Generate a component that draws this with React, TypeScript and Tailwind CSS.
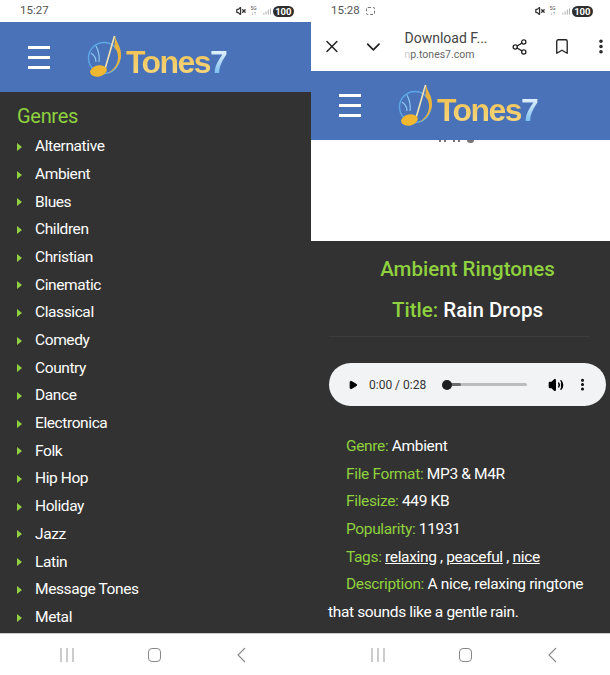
import { Play, Volume2, MoreVertical, X, ChevronDown, Share2, Bookmark, VolumeX } from "lucide-react";

const genres = [
  "Alternative", "Ambient", "Blues", "Children", "Christian", "Cinematic", "Classical", "Comedy",
  "Country", "Dance", "Electronica", "Folk", "Hip Hop", "Holiday", "Jazz", "Latin", "Message Tones", "Metal",
];

function StatusBar({ time, shot }: { time: string; shot?: boolean }) {
  return (
    <div className="flex h-[22px] shrink-0 items-center justify-between bg-white pl-[20px] pr-[17px] text-[#555]">
      <div className="flex items-center gap-[6px] text-[11.5px]">
        <span>{time}</span>
        {shot ? <span className="h-[8px] w-[9px] rounded-[2px] border border-dashed border-[#777]" /> : null}
      </div>
      <div className="flex items-center">
        <VolumeX className="size-[10px] text-[#333]" strokeWidth={3} />
        <span className="ml-[4px] w-[8px] text-center text-[5px] leading-[5px] text-[#555]">5G<br />↓↑</span>
        <svg width="8" height="8" viewBox="0 0 9 8" className="ml-[5px]">
          <path d="M1 8V6M3.500 8V4.500M6 8V2.500M8.500 8V1" stroke="#999" strokeWidth="0.9" />
        </svg>
        <span className="ml-[2px] rounded-full bg-[#2e2e2e] px-[2.500px] text-[9.500px] font-bold leading-[11px] text-white">100</span>
      </div>
    </div>
  );
}

function Logo() {
  return (
    <div className="flex items-center">
      <svg width="38" height="46" viewBox="0 0 38 46" className="shrink-0">
        <circle cx="18" cy="24" r="15.500" fill="none" stroke="#5aa9e6" strokeWidth="1.400" />
        <path d="M10 12c3 6 4 10 3 16M5 19c3 2 5 5 5 9" fill="none" stroke="#8cc8f2" strokeWidth="1.200" />
        <path d="M29 1c1 8 7 12 6 22-1 8-7 14-14 17 8-5 11-11 11-17 0-5-2-8-3.500-9z" fill="#e8b33e" />
        <path d="M28.500 2 19 35" stroke="#f3e3b0" strokeWidth="1.600" />
        <ellipse cx="12.500" cy="37" rx="8.500" ry="5.500" fill="#f0b731" transform="rotate(-12 12.500 37)" />
      </svg>
      <span className="ml-[2px] mt-[9px] bg-gradient-to-b from-[#f0bd48] to-[#f6dc85] bg-clip-text font-['Liberation_Sans',sans-serif] text-[32px] font-bold leading-[36px] tracking-[-1.600px] text-transparent">
        Tones
      </span>
      <span className="mt-[9px] bg-gradient-to-b from-[#ffffff] to-[#58b0ea] bg-clip-text font-['Liberation_Sans',sans-serif] text-[32px] font-bold leading-[36px] text-transparent">
        7
      </span>
    </div>
  );
}

function SiteHeader({ height }: { height: string }) {
  return (
    <div className={`flex shrink-0 items-center bg-[#4a72b9] pl-[28px] ${height}`}>
      <div className="flex w-[22px] flex-col gap-[7px]">
        <div className="h-[3px] bg-white" />
        <div className="h-[3px] bg-white" />
        <div className="h-[3px] bg-white" />
      </div>
      <div className="ml-[36px]">
        <Logo />
      </div>
    </div>
  );
}

function BottomNav({ inset }: { inset: string }) {
  return (
    <div className={`flex h-[42px] shrink-0 items-center border-t border-[#ccc] bg-white ${inset}`}>
      <svg width="14" height="14" viewBox="0 0 14 14">
        <path d="M1 0v14M7 0v14M13 0v14" stroke="#999" strokeWidth="1" />
      </svg>
      <div className="ml-[74px] h-[14px] w-[13px] rounded-[4px] border border-[#888]" />
      <svg width="10" height="16" viewBox="0 0 10 16" className="ml-[75px]">
        <path d="M9 1 2 8l7 7" fill="none" stroke="#888" strokeWidth="1.100" />
      </svg>
    </div>
  );
}

function Meta({ label, children }: { label: string; children: React.ReactNode }) {
  return (
    <div className="h-[27.700px] pl-[17px]">
      <span className="text-[#8fd13f]">{label}</span> {children}
    </div>
  );
}

export default function App() {
  return (
    <div className="flex h-[675px] w-[610px] overflow-hidden bg-white font-['Roboto',sans-serif]">
      <div className="flex w-[311px] flex-col">
        <StatusBar time="15:27" />
        <SiteHeader height="h-[70px]" />
        <div className="min-h-0 flex-1 overflow-hidden bg-[#323232] pl-[17px] pt-[12px]">
          <div className="text-[20px] font-[450] leading-[24px] tracking-[-0.3px] text-[#8fd13f]">Genres</div>
          <ul className="mt-[5px]">
            {genres.map((g) => (
              <li key={g} className="flex h-[27.700px] items-center text-[15.500px] font-[450] tracking-[-0.400px] text-white">
                <span className="h-0 w-0 border-y-[4px] border-l-[5px] border-y-transparent border-l-[#8fd13f]" />
                <span className="ml-[13px]">{g}</span>
              </li>
            ))}
          </ul>
        </div>
        <BottomNav inset="pl-[60px]" />
      </div>
      <div className="flex w-[299px] flex-col">
        <StatusBar time="15:28" shot />
        <div className="flex h-[49px] shrink-0 items-center bg-white text-[#222]">
          <X className="ml-[11px] size-[21px]" strokeWidth={1.800} />
          <ChevronDown className="ml-[20px] size-[24px]" strokeWidth={1.800} />
          <div className="ml-[20px] w-[100px]">
            <div className="-mt-[2px] text-[14px] leading-[18px] text-[#444]">Download F...</div>
            <div className="mt-[1px] text-[10.500px] leading-[14px] text-[#666]">
              <span className="text-[#ccc]">n</span>p.tones7.com
            </div>
          </div>
          <Share2 className="ml-[12px] size-[18px]" strokeWidth={1.800} />
          <Bookmark className="ml-[25px] size-[19px]" strokeWidth={1.800} />
          <MoreVertical className="ml-[21px] size-[19px]" strokeWidth={2.800} />
        </div>
        <SiteHeader height="h-[69px]" />
        <div className="flex h-[101px] shrink-0 justify-center gap-[3px] bg-white pr-[8px]">
          <div className="h-[2px] w-[2px] bg-[#777]" />
          <div className="h-[2px] w-[2px] bg-[#777]" />
          <div className="ml-[4px] h-[2px] w-[2px] bg-[#777]" />
          <div className="h-[2px] w-[2px] bg-[#777]" />
          <div className="ml-[4px] h-[3px] w-[7px] rounded-b-full bg-[#777]" />
        </div>
        <div className="min-h-0 flex-1 overflow-hidden bg-[#323232] pl-[18px] pr-[4px] text-white">
          <div className="mt-[15px] text-center text-[20.500px] font-medium leading-[26px] text-[#8fd13f]">Ambient Ringtones</div>
          <div className="mt-[15px] text-center text-[20.500px] font-medium leading-[26px]">
            <span className="text-[#8fd13f]">Title:</span> Rain Drops
          </div>
          <div className="mr-[16px] mt-[13px] h-px bg-[#3d3d3d]" />
          <div className="mt-[26px] flex h-[43px] items-center rounded-full bg-[#f1f3f4] pl-[19px] text-[#222]">
            <Play className="size-[10px] fill-black text-black" />
            <span className="ml-[11px] text-[12px] text-[#333]">0:00 / 0:28</span>
            <div className="relative ml-[17px] h-[3px] w-[84px] rounded-full bg-[#bdbdbd]">
              <div className="h-full w-[18px] rounded-full bg-[#6b6b6b]" />
              <div className="absolute -top-[3.500px] -left-[1px] size-[10px] rounded-full bg-[#1f1f1f]" />
            </div>
            <Volume2 className="ml-[21px] size-[16px] fill-black text-black" />
            <MoreVertical className="ml-[11px] size-[15px] text-black" strokeWidth={2.800} />
          </div>
          <div className="mt-[27px] text-[15.500px] font-[450] leading-[27.700px] tracking-[-0.350px]">
            <Meta label="Genre:">Ambient</Meta>
            <Meta label="File Format:">MP3 &amp; M4R</Meta>
            <Meta label="Filesize:">449 KB</Meta>
            <Meta label="Popularity:">11931</Meta>
            <Meta label="Tags:">
              <span className="underline">relaxing</span> , <span className="underline">peaceful</span> , <span className="underline">nice</span>
            </Meta>
            <Meta label="Description:">A nice, relaxing ringtone</Meta>
            <div className="-ml-[1px]">that sounds like a gentle rain.</div>
          </div>
        </div>
        <BottomNav inset="pl-[60px]" />
      </div>
    </div>
  );
}
